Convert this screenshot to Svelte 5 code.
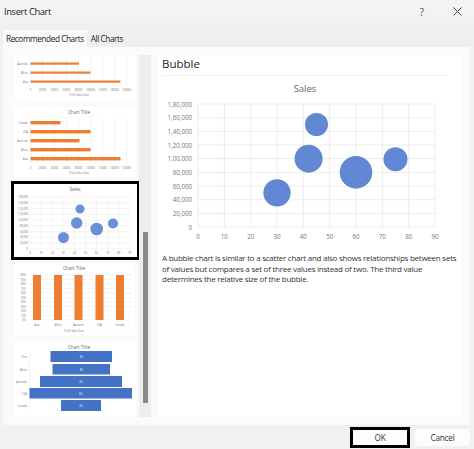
<script>
  const orange = '#ed7d31';
  const blue = '#4472c4';

  // big bubble preview, values in pixels of the 286 wide chart
  const xTicks = [0, 10, 20, 30, 40, 50, 60, 70, 80, 90];
  const yTicks = ['0', '20,000', '40,000', '60,000', '80,000', '1,00,000', '1,20,000', '1,40,000', '1,60,000', '1,80,000'];
  const plot = { left: 36, right: 273, top: 29, bottom: 152 };
  const bubbles = [
    { x: 30, y: 50000, r: 13.7 },
    { x: 45, y: 150000, r: 11.5 },
    { x: 42, y: 100000, r: 14 },
    { x: 60, y: 80000, r: 16.3 },
    { x: 75, y: 99000, r: 12 }
  ];
  const px = (x) => plot.left + (x / 90) * (plot.right - plot.left);
  const py = (y) => plot.bottom - (y / 180000) * (plot.bottom - plot.top);

  const miniBubbles = [
    { cx: 49.5, cy: 53.5, r: 5.5 },
    { cx: 66, cy: 25, r: 4.5 },
    { cx: 62.7, cy: 39, r: 5.7 },
    { cx: 82.7, cy: 45, r: 6.3 },
    { cx: 99, cy: 39.5, r: 5 }
  ];
  const barGrid = [0, 1, 2, 3, 4, 5, 6, 7, 8].map((i) => ({ x: 16.5 + i * 12, label: i * 20000 }));
  const funnel = [
    { label: 'Peru', y: 10, h: 11, x: 36.5, w: 61.5 },
    { label: 'Africa', y: 23, h: 10.5, x: 38.5, w: 57.5 },
    { label: 'Australia', y: 35, h: 11, x: 26, w: 82 },
    { label: 'USA', y: 47, h: 10.5, x: 15.5, w: 102.5 },
    { label: 'Canada', y: 59, h: 11, x: 47, w: 40 }
  ];
  const columns = [19, 40, 60.5, 81.5, 102];
  const colNames = ['Asia', 'Africa', 'Australia', 'USA', 'Canada'];
</script>

<div class="dialog">
  <header class="titlebar">
    <span class="title">Insert Chart</span>
    <div class="controls">
      <span class="help">?</span>
      <svg width="9" height="9" viewBox="0 0 9 9"><path d="M.5.5l8 8M8.5.5l-8 8" stroke="#444" fill="none" /></svg>
    </div>
  </header>

  <nav class="tabs">
    <span class="tab active">Recommended Charts</span>
    <span class="tab">All Charts</span>
  </nav>

  <main class="panel">
    <div class="list">
      <svg class="thumb" width="122" height="45" viewBox="0 0 122 45">
        {#each barGrid as g}<line x1={g.x} x2={g.x} y1="0" y2="30" class="grid" />{/each}
        {#each [[7.5, 48.5, 'Australia'], [16.5, 60, 'Africa'], [25.5, 90, 'Asia']] as [y, w, label]}
          <rect x="16.5" y={y} width={w} height="2.2" fill={orange} />
          <text x="14" y={y + 2} class="tiny end">{label}</text>
        {/each}
        {#each barGrid as g}<text x={g.x} y="36" class="tiny mid">{g.label}</text>{/each}
        <text x="65" y="41" class="tiny mid">Profit  Sales  Sum</text>
      </svg>

      <svg class="thumb gap-7" width="122" height="70" viewBox="0 0 122 70">
        <text x="65" y="7" class="small mid">Chart Title</text>
        {#each barGrid as g}<line x1={g.x} x2={g.x} y1="10" y2="57" class="grid" />{/each}
        {#each [[14, 30, 'Canada'], [23, 60, 'USA'], [32, 49, 'Australia'], [41, 60, 'Africa'], [50, 90, 'Asia']] as [y, w, label]}
          <rect x="16.5" y={y} width={w} height="3.4" fill={orange} />
          <text x="14" y={y + 2.6} class="tiny end">{label}</text>
        {/each}
        {#each barGrid as g}<text x={g.x} y="62" class="tiny mid">{g.label}</text>{/each}
        <text x="65" y="67" class="tiny mid">Profit  Sales  Sum</text>
      </svg>

      <div class="selected">
        <svg class="thumb" width="123" height="73" viewBox="0 0 123 73">
          <text x="61" y="7" class="small mid">Sales</text>
          {#each xTicks as t, i}
            <line x1={16 + i * 11.1} x2={16 + i * 11.1} y1="13" y2="65" class="grid" />
            <text x={16 + i * 11.1} y="70" class="tiny mid">{t}</text>
          {/each}
          {#each yTicks as t, i}
            <line x1="16" x2="116" y1={65 - i * 5.78} y2={65 - i * 5.78} class="grid" />
            <text x="14" y={66 - i * 5.78} class="tiny end">{t}</text>
          {/each}
          {#each miniBubbles as b}<circle cx={b.cx} cy={b.cy} r={b.r} fill="#6b8fd6" />{/each}
        </svg>
      </div>

      <svg class="thumb gap-3" width="121" height="72" viewBox="0 0 121 72">
        <text x="60" y="7" class="small mid">Chart Title</text>
        {#each [0, 1, 2, 3, 4, 5, 6, 7, 8, 9, 10] as i}
          <line x1="15" x2="118" y1={12 + i * 4.5} y2={12 + i * 4.5} class="grid" />
          <text x="12" y={13 + i * 4.5} class="tiny end">{100 - i * 10}%</text>
        {/each}
        {#each columns as x, i}
          <rect x={x} y="12" width="8" height="45" fill={orange} />
          <text x={x + 4} y="62.5" class="tiny mid">{colNames[i]}</text>
        {/each}
        <text x="60" y="69" class="tiny mid">Profit  Sales  Sum</text>
      </svg>

      <svg class="thumb gap-6" width="122" height="76" viewBox="0 0 122 76">
        <text x="65" y="7.5" class="small mid">Chart Title</text>
        <line x1="15.5" x2="15.5" y1="10" y2="70" class="grid" />
        {#each funnel as f}
          <rect x={f.x} y={f.y} width={f.w} height={f.h} fill={blue} />
          <text x="13" y={f.y + 6.5} class="tiny end">{f.label}</text>
          <text x={f.x + f.w / 2} y={f.y + 6.5} class="tiny mid on-blue">60</text>
        {/each}
      </svg>
    </div>

    <div class="track"><div class="scroll-thumb"></div></div>

    <section class="preview">
      <h2>Bubble</h2>
      <svg class="chart" width="286" height="167" viewBox="0 0 286 167">
        <line x1="0" x2="286" y1="0.5" y2="0.5" stroke="#f1f1f1" />
        <text x="143" y="17" class="chart-title">Sales</text>
        {#each xTicks as t}
          <line x1={px(t)} x2={px(t)} y1={plot.top} y2={plot.bottom} class="grid-big" />
          <text x={px(t)} y="163.5" class="axis mid">{t}</text>
        {/each}
        {#each yTicks as t, i}
          <line x1={plot.left} x2={plot.right} y1={py(i * 20000)} y2={py(i * 20000)} class="grid-big" />
          <text x={plot.left - 6} y={py(i * 20000) + 2.5} class="axis end">{t}</text>
        {/each}
        {#each bubbles as b}
          <circle cx={px(b.x)} cy={py(b.y)} r={b.r} fill="#6287d3" />
        {/each}
      </svg>
      <p>A bubble chart is similar to a scatter chart and also shows relationships between sets of values but compares a set of three values instead of two. The third value determines the relative size of the bubble.</p>
    </section>
  </main>

  <footer class="footer">
    <button class="btn ok">OK</button>
    <button class="btn">Cancel</button>
  </footer>
</div>

<style>
  :global(body) {
    margin: 0;
  }

  .dialog {
    width: 474px;
    height: 449px;
    display: flex;
    flex-direction: column;
    background: #f1f1f1;
    font-family: "Open Sans", "Noto Sans", sans-serif;
    color: #222;
    overflow: hidden;
  }

  .titlebar {
    height: 23px;
    display: flex;
    align-items: center;
    justify-content: space-between;
    padding: 0 12px 0 4px;
    background: #f3f3f3;
  }

  .title {
    font-size: 9.4px;
    letter-spacing: -0.4px;
  }

  .controls {
    display: flex;
    align-items: center;
    gap: 29px;
  }

  .help {
    font-size: 10px;
    color: #555;
  }

  .tabs {
    height: 24px;
    display: flex;
    align-items: flex-end;
    padding-left: 3px;
    background: #efefef;
  }

  .tab {
    height: 17px;
    line-height: 17px;
    padding: 0 3px;
    font-size: 8.2px;
    letter-spacing: -0.4px;
  }

  .tab.active {
    background: #fafafa;
    margin-right: 1px;
  }

  .panel {
    height: 362px;
    margin: 0 4px 0 3px;
    padding: 8px 8px 8px 8px;
    display: flex;
    background: #fafafa;
  }

  .list {
    width: 129px;
    display: flex;
    flex-direction: column;
    align-items: flex-start;
  }

  .thumb {
    display: block;
    flex: none;
    background: #fff;
    margin-left: 3px;
  }

  .gap-7 {
    margin-top: 7px;
  }

  .gap-3 {
    margin-top: 3px;
  }

  .gap-6 {
    margin-top: 6px;
  }

  .selected {
    margin-top: 4px;
    width: 123px;
    height: 73px;
    border: 3px solid #000;
    background: #fff;
  }

  .selected .thumb {
    margin-left: 0;
  }

  .track {
    width: 12px;
    margin-left: -1px;
    background: #eee;
    display: flex;
    justify-content: center;
  }

  .scroll-thumb {
    width: 5px;
    height: 171px;
    margin-top: 177px;
    background: #8c8c8c;
  }

  .preview {
    width: 304px;
    margin-left: 7px;
    padding-left: 4px;
    box-sizing: border-box;
    background: #fff;
  }

  h2 {
    margin: 0;
    height: 20px;
    line-height: 17px;
    font-size: 11.5px;
    font-weight: 400;
  }

  .chart {
    display: block;
  }

  p {
    margin: 11px 0 0;
    font-size: 8px;
    letter-spacing: -0.25px;
    line-height: 10.6px;
    color: #333;
  }

  .footer {
    flex: 1;
    display: flex;
    justify-content: flex-end;
    align-items: center;
    gap: 5px;
    padding-right: 4px;
  }

  .btn {
    width: 55px;
    height: 17px;
    padding: 0;
    border: 0;
    border-radius: 2px;
    background: #fdfdfd;
    font: inherit;
    font-size: 8.2px;
    letter-spacing: -0.2px;
    color: #333;
  }

  .btn.ok {
    width: 60px;
    height: 21px;
    border: 3px solid #000;
    border-radius: 0;
    box-sizing: border-box;
  }

  .grid {
    stroke: #ededed;
    stroke-width: 0.6;
  }

  .grid-big {
    stroke: #e4e4e4;
    stroke-width: 0.7;
  }

  .tiny {
    font-size: 2.6px;
    fill: #777;
  }

  .small {
    font-size: 4.6px;
    fill: #666;
  }

  .on-blue {
    fill: #fff;
  }

  .mid {
    text-anchor: middle;
  }

  .end {
    text-anchor: end;
  }

  .chart-title {
    font-size: 9.5px;
    fill: #666;
    text-anchor: middle;
  }

  .axis {
    font-size: 6.2px;
    fill: #777;
  }
</style>
